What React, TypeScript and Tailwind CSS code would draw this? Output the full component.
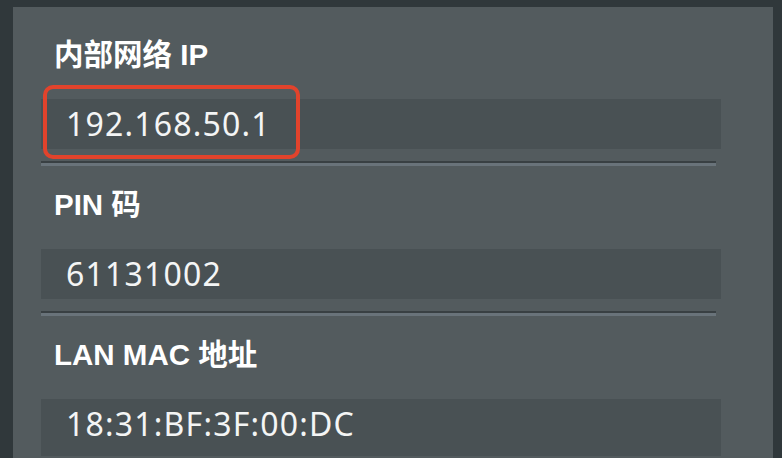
import React from 'react';

interface Field {
  label: string;
  value: string;
  tall?: boolean;
}

const fields: Field[] = [
  { label: '内部网络 IP', value: '192.168.50.1' },
  { label: 'PIN 码', value: '61131002' },
  { label: 'LAN MAC 地址', value: '18:31:BF:3F:00:DC', tall: true },
];

const App = () => {
  return (
    <div className="h-[458px] w-[782px] overflow-hidden bg-[#30383b] pt-[7px] pl-[13px] pr-[9px]">
      <div className="relative h-[451px] bg-[#535b5e] pt-[32px] pl-[28px]">
        {fields.map((field, index) => (
          <div key={field.label}>
            <div
              className="pl-[13px] text-[29.5px] leading-[32px] font-bold text-white"
              style={{ fontFamily: '"Liberation Sans", "Noto Sans CJK SC", sans-serif' }}
            >
              {field.label}
            </div>
            <div
              className={`mt-[28px] w-[680px] bg-[#495154] pl-[25px] text-[32px] leading-[50px] tracking-[1.2px] text-[#f4f5f5] ${
                field.tall ? 'h-[57px]' : 'h-[50px]'
              }`}
              style={{ fontFamily: '"Noto Sans", sans-serif' }}
            >
              {field.value}
            </div>
            {index < fields.length - 1 && (
              <div className="mt-[12px] mb-[23px] w-[675px] border-t-[2px] border-b-[3px] border-t-[#394043] border-b-[#69737a]" />
            )}
          </div>
        ))}

        {/* highlight around the first value */}
        <div className="pointer-events-none absolute top-[78px] left-[30px] h-[74px] w-[257px] rounded-[10px] border-[4px] border-[#e2432c]" />
      </div>
    </div>
  );
};

export default App;
